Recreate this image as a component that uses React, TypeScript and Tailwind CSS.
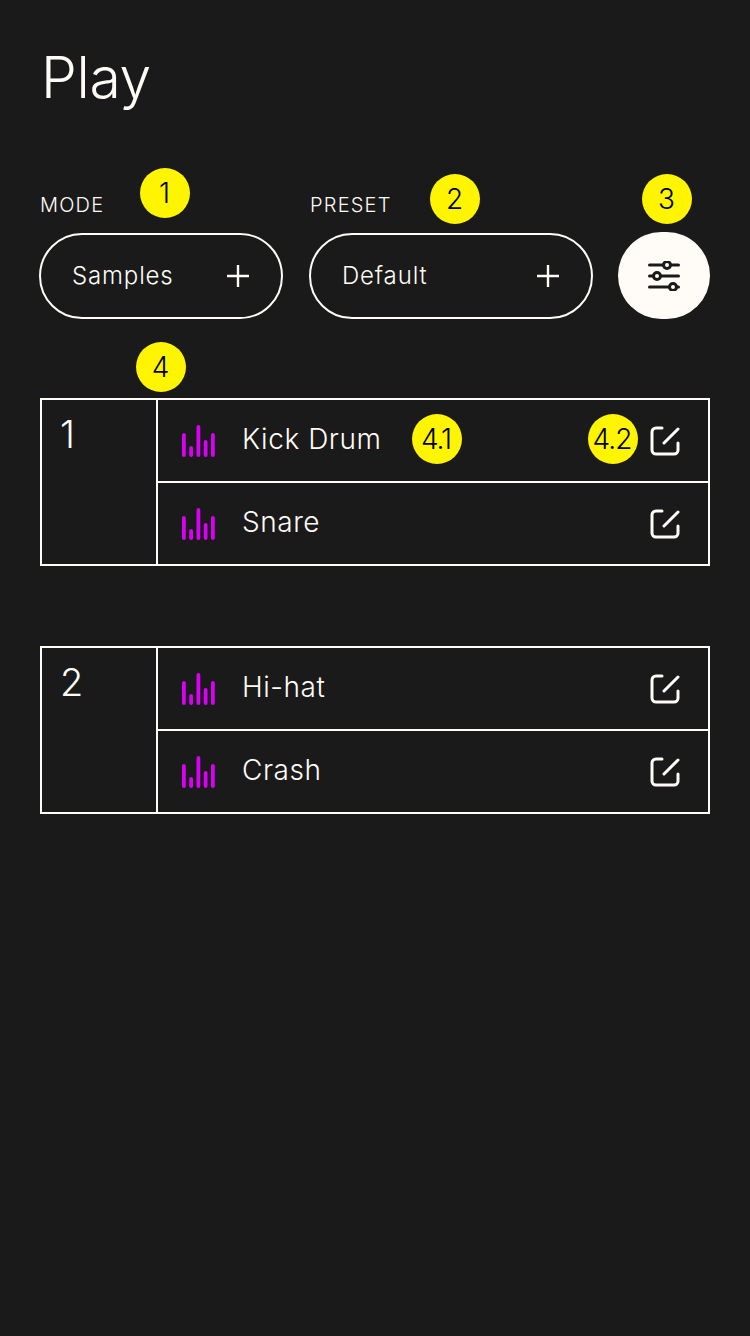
const SANS = "font-['Inter','Liberation_Sans',sans-serif]";

type Row = { name: string; badge?: string; editBadge?: string };

const GROUPS: { id: string; rows: Row[] }[] = [
  {
    id: "1",
    rows: [{ name: "Kick Drum", badge: "4.1", editBadge: "4.2" }, { name: "Snare" }],
  },
  { id: "2", rows: [{ name: "Hi-hat" }, { name: "Crash" }] },
];

function Badge({ label, className }: { label: string; className: string }) {
  return (
    <div
      className={`absolute flex h-[50px] w-[50px] items-center justify-center rounded-full bg-[#fff500] pr-[2px] text-[28px] font-light tracking-[-1px] text-black ${className}`}
    >
      {label}
    </div>
  );
}

function PlusIcon() {
  return (
    <svg width="22" height="22" viewBox="0 0 22 22" fill="none" stroke="#fffcf7" strokeWidth="2.4">
      <path d="M11 0v22M0 11h22" />
    </svg>
  );
}

function WaveIcon() {
  return (
    <svg width="33" height="32" viewBox="0 0 33 32" fill="#d800f5" className="mr-px">
      <rect x="0" y="8" width="3.8" height="24" rx="1.900" />
      <rect x="7.250" y="21" width="3.8" height="11" rx="1.900" />
      <rect x="14.500" y="0" width="3.8" height="32" rx="1.900" />
      <rect x="21.750" y="15" width="3.8" height="17" rx="1.900" />
      <rect x="29" y="8" width="3.8" height="24" rx="1.900" />
    </svg>
  );
}

function EditIcon() {
  return (
    <svg width="30" height="30" viewBox="0 0 30 30" fill="none" stroke="#fffcf7" strokeWidth="3" strokeLinecap="round">
      <path d="M12 2H6a4 4 0 0 0-4 4v18a4 4 0 0 0 4 4h18a4 4 0 0 0 4-4v-7" />
      <path d="M14 17 28 3" />
    </svg>
  );
}

function SlidersIcon() {
  return (
    <svg width="32" height="30" viewBox="0 0 32 30" fill="#fffcf7" stroke="#1a1a1a" strokeWidth="3" strokeLinecap="round">
      <path d="M1.500 4h29M1.500 15h29M1.500 26h29" />
      <circle cx="19" cy="4" r="3.500" />
      <circle cx="9" cy="15" r="3.500" />
      <circle cx="25" cy="26" r="3.500" />
    </svg>
  );
}

function Select({ label, value, width }: { label: string; value: string; width: string }) {
  return (
    <div className={`flex flex-col gap-[16px] ${width}`}>
      <div className="pl-px text-[20px] leading-6 font-[350] tracking-[1.2px] text-[#fffcf7]">{label}</div>
      <div className="flex h-[86px] items-center justify-between rounded-[43px] border-2 border-[#fffcf7] pr-[32px] pl-[31px]">
        <span className="text-[24px] font-[350] tracking-[0.85px] text-[#fffcf7]">{value}</span>
        <PlusIcon />
      </div>
    </div>
  );
}

export default function App() {
  return (
    <div className={`relative h-[1336px] w-[750px] overflow-hidden bg-[#1a1a1a] text-[#fffcf7] ${SANS}`}>
      <div className="px-[41px] pt-[40px] text-[57px] leading-[76px] font-[350] tracking-[-0.3px]">Play</div>

      <div className="relative mt-[77px] ml-[39px] flex w-[671px] items-end">
        <Select label="MODE" value="Samples" width="w-[244px]" />
        <div className="ml-[26px]">
          <Select label="PRESET" value="Default" width="w-[284px]" />
        </div>
        <div className="ml-[25px] flex h-[87px] w-[92px] items-center justify-center rounded-full bg-[#fffcf7]">
          <SlidersIcon />
        </div>
        <Badge label="1" className="top-[-25px] left-[101px]" />
        <Badge label="2" className="top-[-19px] left-[391px]" />
        <Badge label="3" className="top-[-19px] left-[603px]" />
      </div>

      <div className="relative mt-[79px] flex flex-col gap-[80px] px-[40px]">
        <Badge label="4" className="top-[-56px] left-[136px]" />
        {GROUPS.map((g) => (
          <div key={g.id} className="flex h-[168px] border-2 border-[#fffcf7]">
            <div className="w-[116px] shrink-0 border-r-2 border-[#fffcf7] pt-[10px] pl-[18px] text-[38px] leading-[48px] font-[350]">
              {g.id}
            </div>
            <div className="flex flex-1 flex-col">
              {g.rows.map((r, i) => (
                <div
                  key={r.name}
                  className={`relative flex flex-1 items-center pr-[28px] pl-[24px] ${i === 0 ? "border-b-2 border-[#fffcf7]" : ""}`}
                >
                  <WaveIcon />
                  <span className="ml-[26px] flex-1 pb-[4px] text-[28px] font-[350] tracking-[0.55px]">{r.name}</span>
                  <EditIcon />
                  {r.badge && <Badge label={r.badge} className="top-[14px] left-[254px]" />}
                  {r.editBadge && <Badge label={r.editBadge} className="top-[14px] left-[430px]" />}
                </div>
              ))}
            </div>
          </div>
        ))}
      </div>
    </div>
  );
}
